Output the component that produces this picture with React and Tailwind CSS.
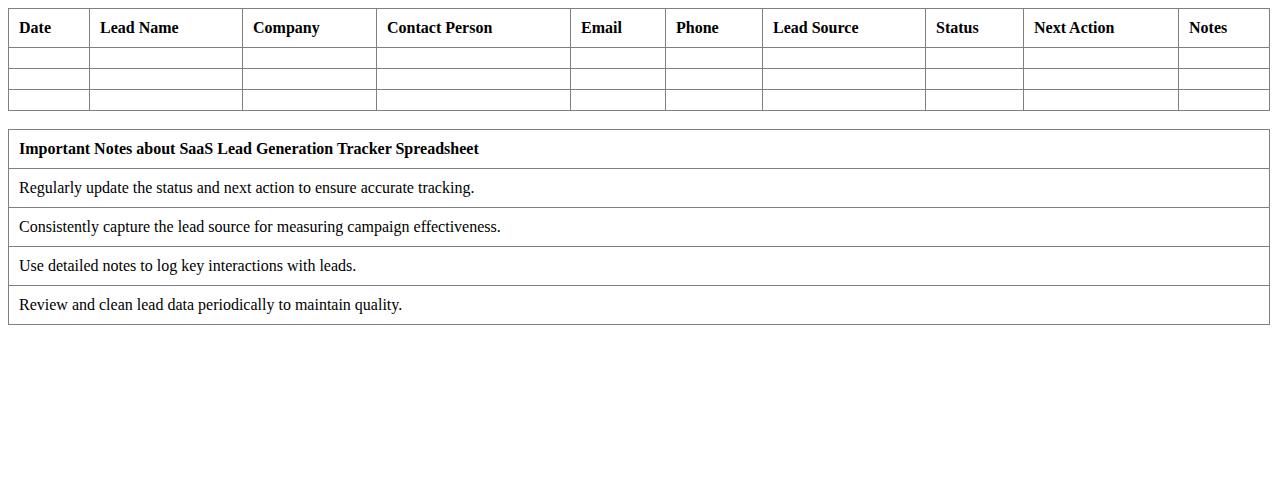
export default function App() {
  const cols = [
    ["Date", "w-[81px]"],
    ["Lead Name", "w-[153px]"],
    ["Company", "w-[134px]"],
    ["Contact Person", "w-[194px]"],
    ["Email", "w-[95px]"],
    ["Phone", "w-[97px]"],
    ["Lead Source", "w-[163px]"],
    ["Status", "w-[98px]"],
    ["Next Action", "w-[155px]"],
    ["Notes", "w-[91px]"],
  ];
  const notes = [
    "Regularly update the status and next action to ensure accurate tracking.",
    "Consistently capture the lead source for measuring campaign effectiveness.",
    "Use detailed notes to log key interactions with leads.",
    "Review and clean lead data periodically to maintain quality.",
  ];
  return (
    <div className="p-2 bg-white text-black text-[16px] leading-[normal] font-['Liberation_Serif','Times_New_Roman',serif]">
      <table className="w-full table-fixed border-collapse">
        <colgroup>
          {cols.map(([n, w]) => (
            <col key={n} className={w} />
          ))}
        </colgroup>
        <thead>
          <tr>
            {cols.map(([n]) => (
              <th key={n} className="border border-[#808080] p-[10px] text-left font-bold">
                {n}
              </th>
            ))}
          </tr>
        </thead>
        <tbody>
          {[0, 1, 2].map((r) => (
            <tr key={r}>
              {cols.map(([n]) => (
                <td key={n} className="border border-[#808080] p-[10px]"></td>
              ))}
            </tr>
          ))}
        </tbody>
      </table>
      <table className="w-full border-collapse mt-[18px]">
        <thead>
          <tr>
            <th className="border border-[#808080] p-[10px] text-left font-bold">
              Important Notes about SaaS Lead Generation Tracker Spreadsheet
            </th>
          </tr>
        </thead>
        <tbody>
          {notes.map((n) => (
            <tr key={n}>
              <td className="border border-[#808080] p-[10px]">{n}</td>
            </tr>
          ))}
        </tbody>
      </table>
    </div>
  );
}
